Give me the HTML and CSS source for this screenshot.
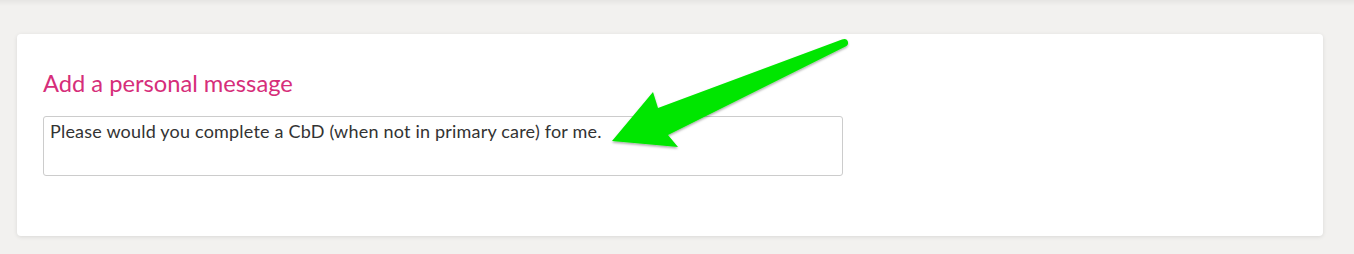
FILE: index.html
```html
<!DOCTYPE html>
<html lang="en">
<head>
<meta charset="utf-8">
<title>Add a personal message</title>
<link rel="stylesheet" href="styles.css">
</head>
<body>
<div class="topbar"></div>
<main class="page">
  <section class="card">
    <h2 class="card-title">Add a personal message</h2>
    <div class="message-box">Please would you complete a CbD (when not in primary care) for me.</div>
  </section>
</main>
<svg class="annotation-arrow" width="1354" height="254" viewBox="0 0 1354 254" xmlns="http://www.w3.org/2000/svg">
  <defs>
    <filter id="arrowShadow" x="-10%" y="-10%" width="120%" height="130%">
      <feDropShadow dx="0" dy="1.5" stdDeviation="1.2" flood-color="#000" flood-opacity="0.35"/>
    </filter>
  </defs>
  <path filter="url(#arrowShadow)" fill="#00e600"
        d="M612 141 L653 92 L658 108 L842 39.5 Q847 38 848 42 Q848.5 45 845.5 46.5 L668 135 L678 147 Z"/>
</svg>
</body>
</html>
```

FILE: styles.css
```css
html, body {
  margin: 0;
  padding: 0;
}
body {
  background: #f2f1ef;
  font-family: Lato, "Noto Sans", sans-serif;
  width: 1354px;
  height: 254px;
  overflow: hidden;
  position: relative;
}
.topbar {
  height: 6px;
  background: linear-gradient(to bottom, rgba(0,0,0,0.05), rgba(0,0,0,0));
}
.page {
  padding: 28px 31px 0 17px;
}
.card {
  background: #fff;
  border-radius: 4px;
  box-shadow: 0 1px 4px rgba(0,0,0,0.10);
  height: 202px;
  box-sizing: border-box;
  padding: 35px 26px 0 26px;
}
.card-title {
  margin: 0 0 18px 0;
  font-weight: 400;
  font-size: 23.7px;
  line-height: 29px;
  color: #d62e7a;
}
.message-box {
  width: 800px;
  height: 60px;
  box-sizing: border-box;
  border: 1px solid #cccccc;
  border-radius: 3px;
  padding: 2px 6px;
  font-size: 18px;
  letter-spacing: 0.2px;
  line-height: 24px;
  color: #333333;
}
.annotation-arrow {
  position: absolute;
  left: 0;
  top: 0;
  pointer-events: none;
}
```
